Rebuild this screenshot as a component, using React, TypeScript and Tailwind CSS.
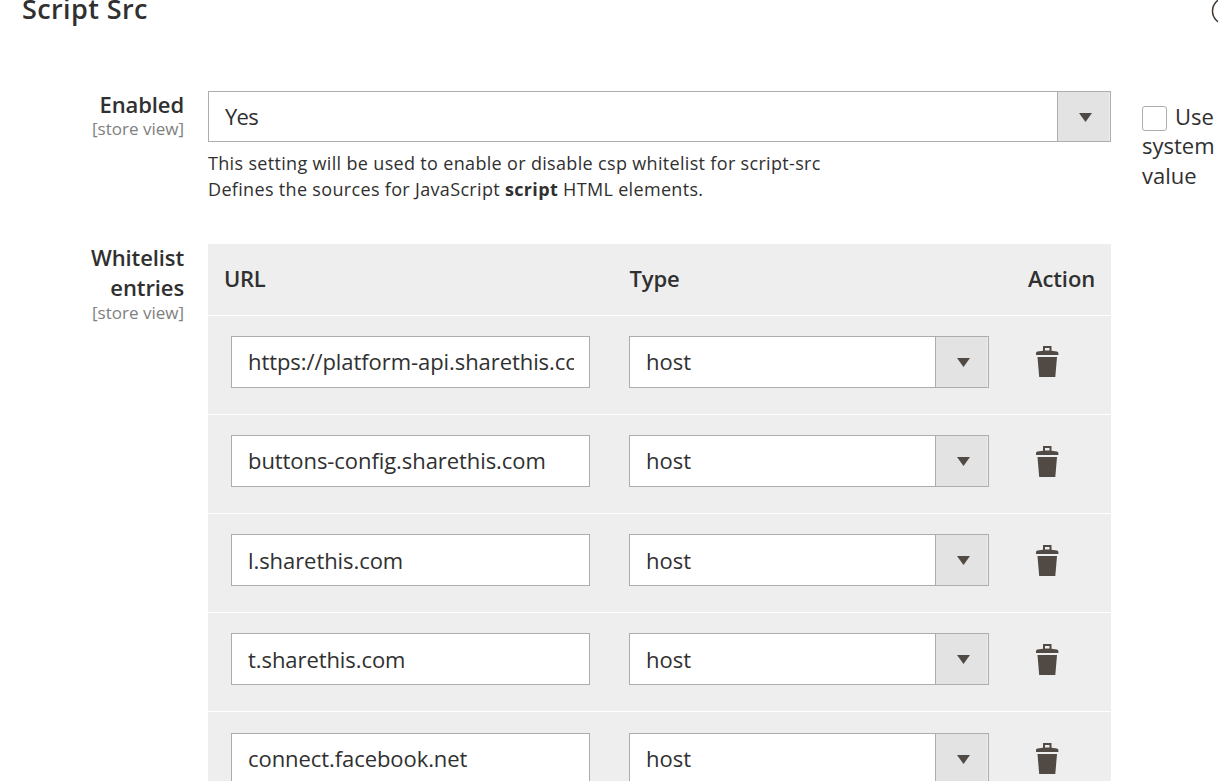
import React from "react";

const entries = [
  { url: "https://platform-api.sharethis.com", pad: "pt-[20px]", icon: "pt-[30px]", line: "leading-[48px]" },
  { url: "buttons-config.sharethis.com", pad: "pt-[20px]", icon: "pt-[31px]", line: "leading-[48px]" },
  { url: "l.sharethis.com", pad: "pt-[20px]", icon: "pt-[31px]", line: "leading-[50px]" },
  { url: "t.sharethis.com", pad: "pt-[20px]", icon: "pt-[31px]", line: "leading-[50px]" },
  { url: "connect.facebook.net", pad: "pt-[21px]", icon: "pt-[31px]", line: "leading-[48px]" },
];

function Select({ value, className, arrow }: { value: string; className: string; arrow: string }) {
  return (
    <div className={`flex border border-[#adadad] bg-white ${className}`}>
      <div className="flex-1 pl-4">{value}</div>
      <div className="flex w-[53px] items-center justify-center border-l border-[#adadad] bg-[#e3e3e3] pl-[2px] shadow-[inset_-1px_0_0_#eeeeee]">
        <svg className={arrow} width="13" height="9" viewBox="0 0 13 9" fill="#514943">
          <path d="M0 0h13L6.5 9z" />
        </svg>
      </div>
    </div>
  );
}

function Trash() {
  return (
    <svg width="24" height="31" viewBox="0.5 0 24 31" fill="#514943">
      <path fillRule="evenodd" d="M7.500 0h8.500v4.700l5.300.9Q22.900 6 22.900 7.200V9H.5V7.200Q.5 6 2 5.600L7.500 4.700zM9.500 2v2.500h4.500V2z" />
      <path d="M2 11h19.500l-1.700 20H3.700z" />
    </svg>
  );
}

function Label({ children, gap }: { children: React.ReactNode; gap: string }) {
  return (
    <div className="w-[184px] shrink-0 text-right">
      <div className="font-semibold leading-[30px] tracking-[-0.1px]">{children}</div>
      <div className={`text-[17px] leading-[20px] text-[#808080] ${gap}`}>[store view]</div>
    </div>
  );
}

export default function App() {
  return (
    <div className="h-[781px] w-[1218px] overflow-hidden bg-white font-['Open_Sans',sans-serif] text-[22px] text-[#303030]">
      <div className="flex h-[91px] items-start justify-between overflow-hidden">
        <h2 className="-mt-[9px] ml-[22px] text-[27px] font-semibold leading-[36px] tracking-[0.4px]">Script Src</h2>
        <svg className="-mt-[3px] w-[7px]" height="28" viewBox="0 0 7 28" fill="none" stroke="#41362f" strokeWidth="1.500">
          <circle cx="14.500" cy="14" r="13" />
        </svg>
      </div>
      <div className="flex h-[153px] items-start">
        <div className="-mt-[2px]"><Label gap="mt-0">Enabled</Label></div>
        <div className="ml-6 w-[903px]">
          <Select value="Yes" className="h-[51px] leading-[49px] tracking-[-0.7px]" arrow="mt-[2px]" />
          <p className="mt-[8px] whitespace-nowrap text-[18px] leading-[26px] tracking-[0.33px]">
            This setting will be used to enable or disable csp whitelist for script-src
            <br />
            Defines the sources for JavaScript <b>script</b> HTML elements.
          </p>
        </div>
        <div className="ml-[31px] mt-[11px] w-[76px] leading-[29.500px]">
          <div className="flex h-[29px] items-start">
            <span className="mr-2 mt-[4px] h-[25px] w-[25px] shrink-0 rounded-[3px] border border-[#adadad]" />
            <span>Use</span>
          </div>
          system value
        </div>
      </div>
      <div className="flex items-start">
        <div className="-mt-[2px]">
          <Label gap="mt-px">Whitelist<br />entries</Label>
        </div>
        <div className="ml-6 w-[903px] bg-[#eee]">
          <div className="flex h-[71px] items-center pb-[2px] font-semibold tracking-[-0.1px]">
            <div className="w-[405.500px] pl-4 tracking-[-0.3px]">URL</div>
            <div className="w-[398.500px] pl-4">Type</div>
            <div className="pl-4">Action</div>
          </div>
          {entries.map((e) => (
            <div key={e.url} className="flex h-[99px] items-start border-t border-white">
              <div className={`w-[421px] pl-[23px] ${e.pad}`}>
                <div className="h-[52px] w-[359px] border border-[#adadad] bg-white pl-[16px] pr-[15px]">
                  <div className={`overflow-hidden whitespace-nowrap tracking-[-0.07px] ${e.line}`}>{e.url}</div>
                </div>
              </div>
              <div className={`w-[407px] ${e.pad}`}>
                <Select value="host" className={`h-[52px] w-[360px] ${e.line}`} arrow="mt-[1px]" />
              </div>
              <div className={e.icon}><Trash /></div>
            </div>
          ))}
        </div>
      </div>
    </div>
  );
}
